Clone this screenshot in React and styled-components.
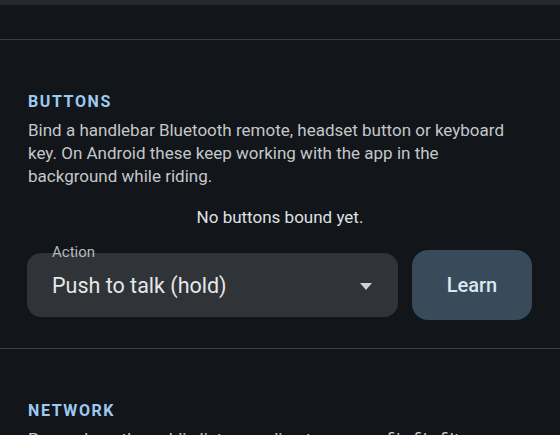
import React from 'react';
import styled, { createGlobalStyle } from 'styled-components';

const GlobalStyle = createGlobalStyle`
	html, body {
		margin: 0;
		padding: 0;
		background: #121519;
	}

	body {
		font-family: Roboto, 'Noto Sans', 'Liberation Sans', sans-serif;
		color: #c4c7ca;
		-webkit-font-smoothing: antialiased;
	}
`;

const Page = styled.div`
	display: flex;
	flex-direction: column;
	width: 560px;
	height: 435px;
	overflow: hidden;
	background: #121519;

	& > * {
		flex-shrink: 0;
	}
`;

const TopStrip = styled.div`
	height: 5px;
	background: #262a2f;
	margin-bottom: 34px;
`;

const Section = styled.section`
	display: flex;
	flex-direction: column;
	border-top: 1px solid #3c4045;
	padding: 52px 24px 28px 28px;
`;

const Heading = styled.h2`
	margin: 0;
	font-size: 16px;
	line-height: 20px;
	font-weight: 700;
	letter-spacing: 1.6px;
	color: #9dcaf0;
`;

const Description = styled.p`
	margin: 7px 0 0;
	max-width: 490px;
	font-size: 17px;
	line-height: 23px;
	color: #c4c7ca;
`;

const EmptyNote = styled.p`
	margin: 18px 0 0;
	font-size: 17px;
	line-height: 23px;
	text-align: center;
	color: #dfe1e3;
	padding-right: 4px;
`;

const BindRow = styled.div`
	display: flex;
	align-items: center;
	gap: 14px;
	margin-top: 21px;
	padding-right: 4px;
	margin-left: -1px;
`;

const SelectField = styled.div`
	position: relative;
	flex: 1;
	height: 64px;
	display: flex;
	align-items: center;
	justify-content: space-between;
	padding: 0 26px 0 25px;
	box-sizing: border-box;
	background: #303337;
	border-radius: 14px;
	cursor: pointer;
`;

const FloatingLabel = styled.span`
	position: absolute;
	left: 25px;
	top: -10px;
	font-size: 15px;
	line-height: 18px;
	color: #b7babd;
`;

const SelectValue = styled.span`
	font-size: 21.5px;
	color: #e6e8ea;
`;

const Caret = styled.svg`
	width: 12px;
	height: 7px;
	margin-top: 2px;
	fill: #cfd1d3;
`;

const LearnButton = styled.button`
	width: 120px;
	height: 70px;
	border: none;
	border-radius: 16px;
	background: #394a5b;
	color: #dce6f0;
	font-family: inherit;
	font-size: 20px;
	font-weight: 500;
	cursor: pointer;
`;

export default function App() {
	return (
		<>
			<GlobalStyle />
			<Page>
				<TopStrip />
				<Section>
					<Heading>BUTTONS</Heading>
					<Description>
						Bind a handlebar Bluetooth remote, headset button or keyboard
						key. On Android these keep working with the app in the
						background while riding.
					</Description>
					<EmptyNote>No buttons bound yet.</EmptyNote>
					<BindRow>
						<SelectField>
							<FloatingLabel>Action</FloatingLabel>
							<SelectValue>Push to talk (hold)</SelectValue>
							<Caret viewBox="0 0 12 7">
								<path d="M0 0 L12 0 L6 7 Z" />
							</Caret>
						</SelectField>
						<LearnButton>Learn</LearnButton>
					</BindRow>
				</Section>
				<Section>
					<Heading>NETWORK</Heading>
					<Description>
						Peers share the public list according to your profile file filter.
					</Description>
				</Section>
			</Page>
		</>
	);
}
